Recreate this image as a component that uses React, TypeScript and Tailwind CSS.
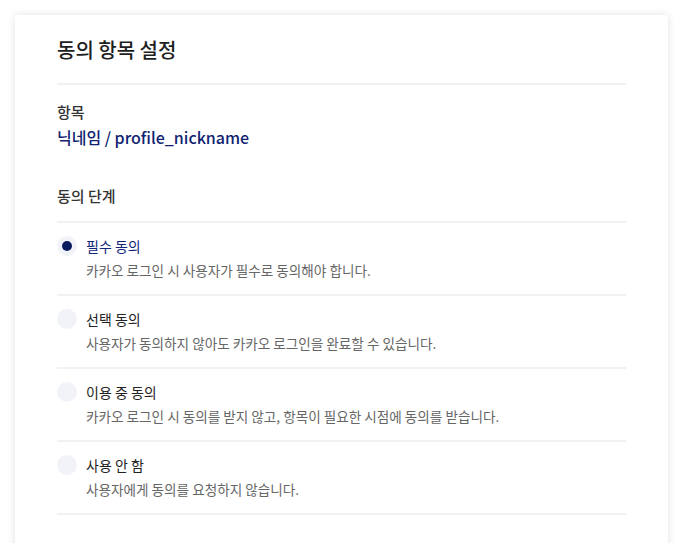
import { useState } from 'react';

const options = [
  { id: 'required', label: '필수 동의', desc: '카카오 로그인 시 사용자가 필수로 동의해야 합니다.' },
  { id: 'optional', label: '선택 동의', desc: '사용자가 동의하지 않아도 카카오 로그인을 완료할 수 있습니다.' },
  { id: 'inuse', label: '이용 중 동의', desc: '카카오 로그인 시 동의를 받지 않고, 항목이 필요한 시점에 동의를 받습니다.' },
  { id: 'none', label: '사용 안 함', desc: '사용자에게 동의를 요청하지 않습니다.' },
];

export default function App() {
  const [selected, setSelected] = useState('required');

  return (
    <div
      className="h-[543px] bg-white pt-[15px] px-[15px] overflow-hidden"
      style={{ fontFamily: '"Noto Sans CJK KR", "Noto Sans", sans-serif' }}
    >
      <div className="bg-white shadow-[0_0_8px_rgba(0,0,0,0.12)] rounded-t-[2px] px-[42px] pt-[21px] pb-[40px] min-h-[560px]">
        <h1 className="text-[20px] leading-[28px] font-medium text-[#1e1e1e] pb-[19px] border-b-2 border-[#f1f1f1]">
          동의 항목 설정
        </h1>

        <div className="pt-[17px]">
          <div className="text-[15px] leading-[20px] font-medium text-[#333]">항목</div>
          <div className="mt-[3px] text-[16px] leading-[24px] font-medium text-[#0f2370]">
            닉네임 / profile_nickname
          </div>
        </div>

        <div className="mt-[37px] text-[15px] leading-[20px] font-medium text-[#333] pb-[15px] border-b-2 border-[#f1f1f1]">
          동의 단계
        </div>

        <div className="flex flex-col">
          {options.map((o) => {
            const on = selected === o.id;
            return (
              <label
                key={o.id}
                onClick={() => setSelected(o.id)}
                className="flex gap-[9px] pt-[13px] pb-[14px] border-b-2 border-[#f1f1f1] cursor-pointer"
              >
                <span className="w-[20px] h-[20px] rounded-full bg-[#f2f3f8] flex items-center justify-center shrink-0">
                  {on && <span className="w-[10px] h-[10px] rounded-full bg-[#0a1c5e]" />}
                </span>
                <span className="flex flex-col">
                  <span className={`text-[14px] leading-[20px] ${on ? 'text-[#12277a]' : 'text-[#222]'}`}>
                    {o.label}
                  </span>
                  <span className="mt-[4px] text-[13.6px] leading-[20px] text-[#666]">{o.desc}</span>
                </span>
              </label>
            );
          })}
        </div>
      </div>
    </div>
  );
}
